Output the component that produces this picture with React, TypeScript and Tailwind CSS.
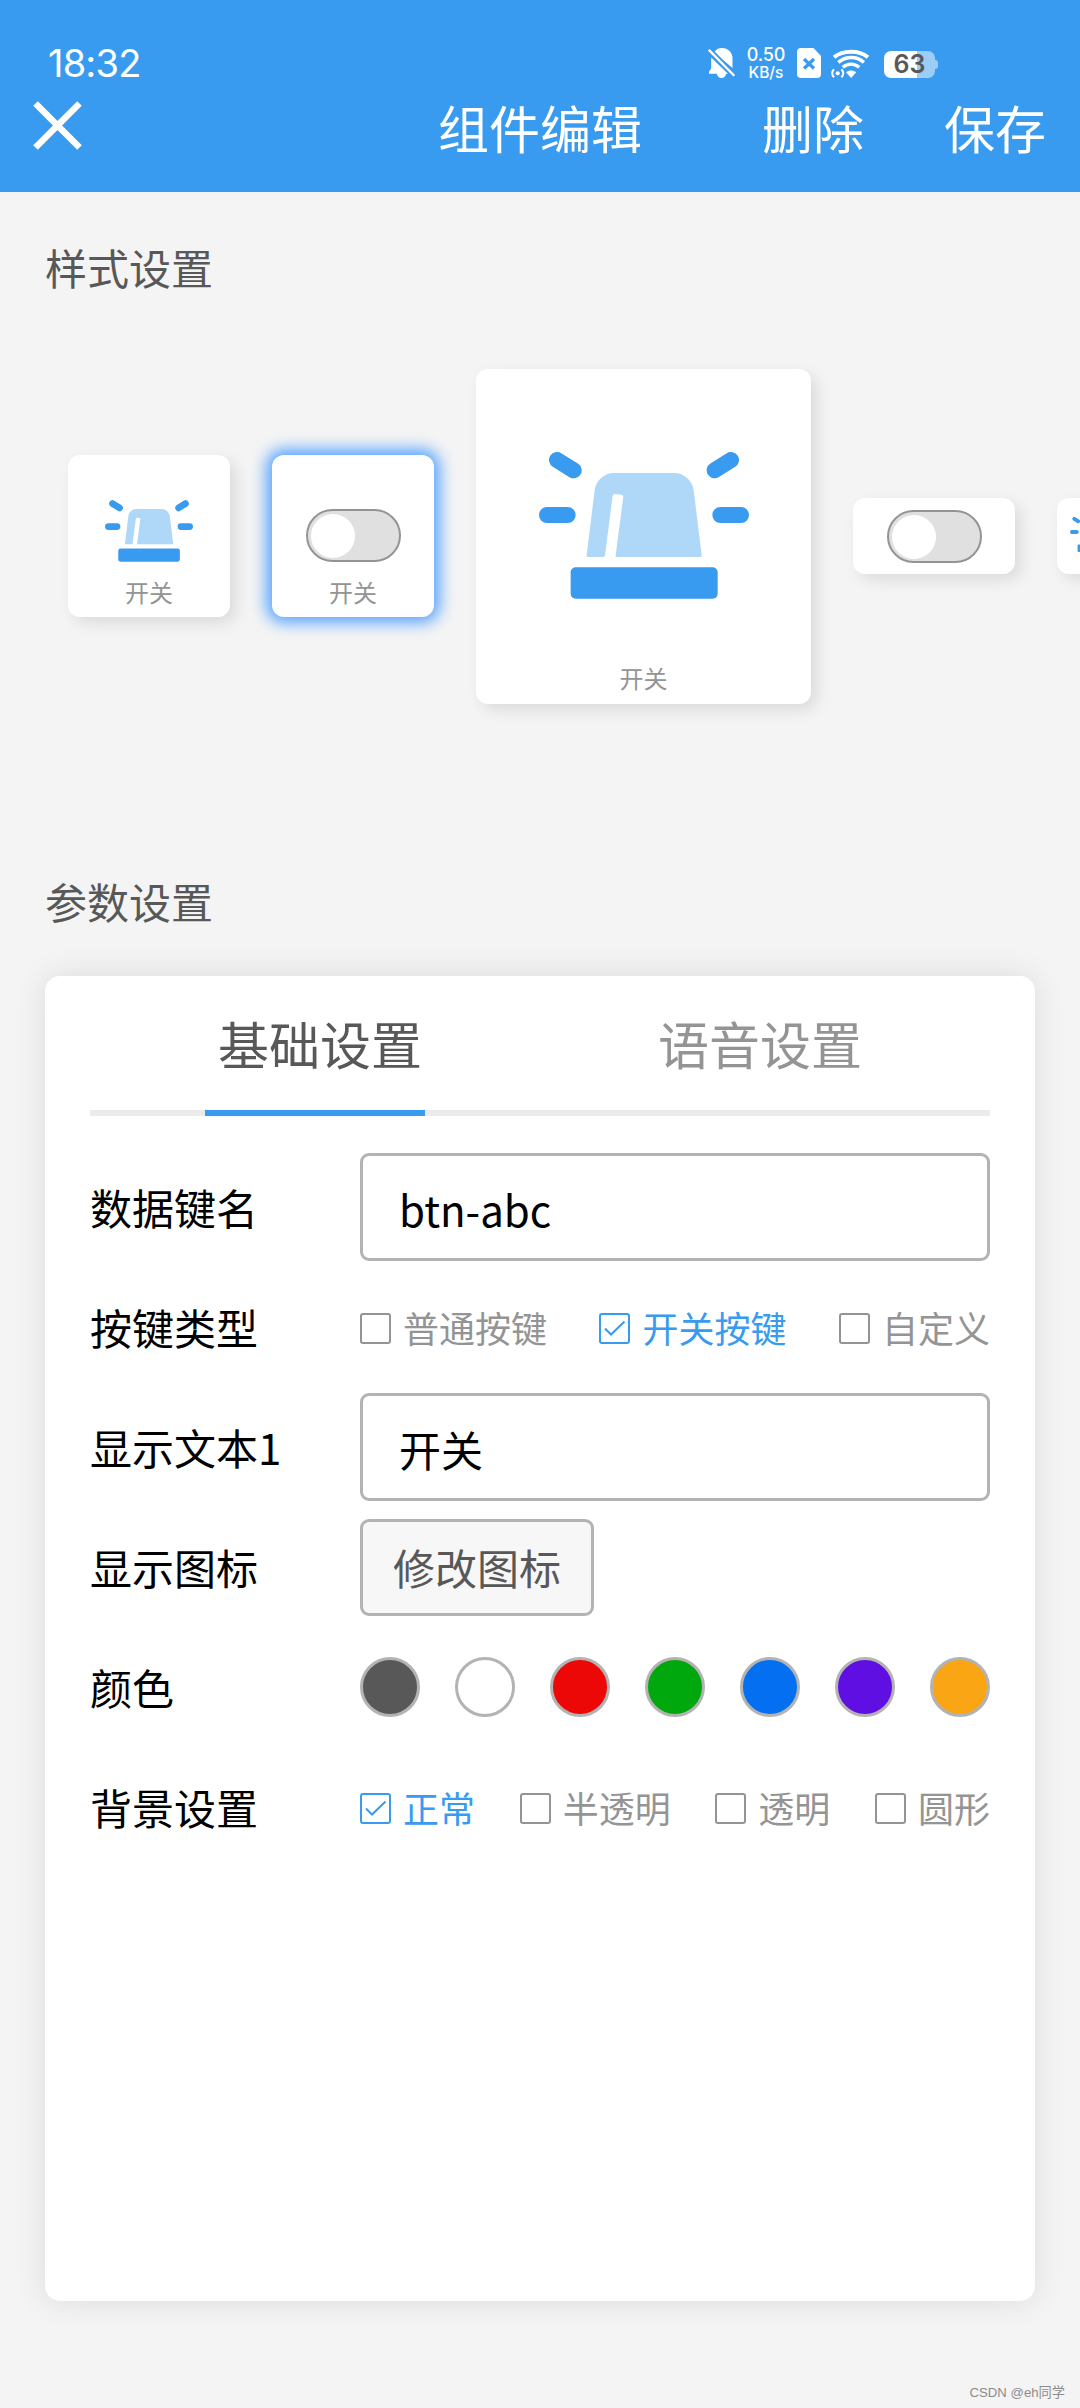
import { useState } from "react";
import type { ReactNode } from "react";

const COLORS = [
  "#585858",
  "#ffffff",
  "#eb0807",
  "#01a80d",
  "#056ff1",
  "#600fe2",
  "#faa614",
];

const KEY_TYPES = ["普通按键", "开关按键", "自定义"];
const BACKGROUNDS = ["正常", "半透明", "透明", "圆形"];

export default function App() {
  const [keyType, setKeyType] = useState("开关按键");
  const [background, setBackground] = useState("正常");

  return (
    <div className="flex h-[2408px] w-[1080px] flex-col overflow-hidden bg-[#f4f4f4] font-['Noto_Sans_CJK_SC',sans-serif] text-[42px] leading-none text-black">
      <header className="h-[192px] shrink-0 bg-[#399bef] text-white">
        <StatusBar />
        <NavBar />
      </header>

      <h2 className="mt-[54px] ml-[45px] h-[42px] shrink-0 text-[#585858]">
        样式设置
      </h2>
      <StyleList />

      <h2 className="mt-[96px] ml-[45px] h-[42px] shrink-0 text-[#585858]">
        参数设置
      </h2>
      <section className="mx-[45px] mt-[54px] h-[1325px] shrink-0 rounded-[15px] bg-white px-[45px] shadow-[0_0_32px_rgba(0,0,0,0.1)]">
        <Tabs />
        <div className="mt-[31px]">
          <Row label="数据键名">
            <TextField value="btn-abc" />
          </Row>
          <Row label="按键类型">
            <CheckGroup options={KEY_TYPES} value={keyType} onChange={setKeyType} />
          </Row>
          <Row label="显示文本1">
            <TextField value="开关" />
          </Row>
          <Row label="显示图标">
            <button
              type="button"
              className="h-[97px] w-[234px] rounded-[9px] border-[3px] border-[#b3b3b3] bg-[#f7f7f7] text-[#585858]"
            >
              修改图标
            </button>
          </Row>
          <Row label="颜色">
            <div className="flex w-full justify-between">
              {COLORS.map((color) => (
                <span
                  key={color}
                  className="size-[60px] rounded-full border-[3px] border-[#b3b3b3]"
                  style={{ backgroundColor: color }}
                />
              ))}
            </div>
          </Row>
          <Row label="背景设置">
            <CheckGroup
              options={BACKGROUNDS}
              value={background}
              onChange={setBackground}
            />
          </Row>
        </div>
      </section>

      <footer className="mt-[85px] mr-[15px] text-right font-['Liberation_Sans','Noto_Sans_CJK_SC',sans-serif] text-[13.2px] leading-[14px] text-[#8c8c8c]">
        CSDN @eh同学
      </footer>
    </div>
  );
}

function StatusBar() {
  return (
    <div className="flex h-[96px] items-start pt-[48px] pl-[48px] font-['Inter',sans-serif]">
      <span className="w-[660px] text-[38px] leading-[30px] tracking-[-0.8px]">
        18:32
      </span>
      <svg className="h-[30px] w-[28px]" viewBox="0 0 28 30" fill="currentColor">
        <path d="M6 4.400C8 1.500 10.500 0 14 0c6 0 10.500 4.500 10.500 10.500v9.500z" />
        <path d="M3.200 9.500 20 25.800H18.200c-.5 2.500-2.200 4.200-4.700 4.200s-4.200-1.700-4.700-4.200H1v-2l2.200-3.500z" />
        <path d="M2.200.4 27.700 26.400" stroke="#399bef" strokeWidth="2" />
        <path d="M.8 1.800 26.300 27.800" stroke="currentColor" strokeWidth="2.300" />
      </svg>
      <div className="ml-[11px] flex w-[38px] flex-col items-center font-medium">
        <span className="text-[18px] leading-[14px] tracking-[-0.2px]">0.50</span>
        <span className="mt-[4px] text-[15.500px] leading-[13px]">KB/s</span>
      </div>
      <svg className="ml-[12px] h-[30px] w-[24px]" viewBox="0 0 24 30">
        <path
          d="M4 0h12.500L24 8v18a4 4 0 0 1-4 4H4a4 4 0 0 1-4-4V4a4 4 0 0 1 4-4z"
          fill="currentColor"
        />
        <path d="m7 11 10 9.500M17 11 7 20.500" stroke="#399bef" strokeWidth="3.200" />
      </svg>
      <svg
        className="ml-[10px] h-[30px] w-[38px]"
        viewBox="0 0 38 30"
        fill="none"
        stroke="currentColor"
      >
        <path d="M3 9.200C12 1.800 28 1.800 37 9.200" strokeWidth="4" />
        <path d="M7.300 14.400c7.500-6.600 18.400-6.600 25.600 0" strokeWidth="3.600" />
        <path d="M11.800 19.300c5-4.200 11.400-4.200 16.500 0" strokeWidth="3.400" />
        <path d="m15 24.200c3-2.200 7.200-2.200 10.200 0L20.100 30z" fill="currentColor" stroke="none" />
        <circle cx="6.700" cy="25.300" r="2.100" fill="currentColor" stroke="none" />
        <path d="M3 21.300c-2.400 2.400-2.400 5.600 0 8M10.400 21.300c2.400 2.400 2.400 5.600 0 8" strokeWidth="2" />
      </svg>
      <div className="mt-[3px] ml-[15px] flex items-center">
        <span className="flex h-[27px] w-[51px] items-center justify-center rounded-[7px] bg-[linear-gradient(90deg,#fff_33px,#9ccdf7_33px)] text-[25px] font-semibold leading-none text-[#585858]">
          63
        </span>
        <span className="h-[9px] w-[3px] rounded-r-[3px] bg-[#9ccdf7]" />
      </div>
    </div>
  );
}

function NavBar() {
  return (
    <div className="flex h-[59px] items-center text-[51px]">
      <button type="button" aria-label="关闭" className="ml-[33px]">
        <svg className="size-[49px]" viewBox="0 0 49 49">
          <path
            d="m2.500 2.500 44 44m0-44-44 44"
            stroke="currentColor"
            strokeWidth="6.500"
          />
        </svg>
      </button>
      <h1 className="mt-[4px] ml-[356px] w-[204px]">组件编辑</h1>
      <button type="button" className="mt-[4px] ml-[120px]">
        删除
      </button>
      <button type="button" className="mt-[4px] ml-[80px]">
        保存
      </button>
    </div>
  );
}

function StyleList() {
  return (
    <div className="flex h-[496px] shrink-0 items-center gap-[42px] overflow-hidden pl-[68px]">
      <Card className="h-[162px] w-[162px] pb-[13px] shadow-[6px_6px_15px_rgba(0,0,0,0.1)]">
        <Siren className="mb-[18px] h-[62px] w-[88px]" />
        <CardLabel />
      </Card>
      <Card className="h-[162px] w-[162px] pb-[13px] shadow-[0_0_15px_6px_#5aa5ff]">
        <Toggle className="mb-[18px]" />
        <CardLabel />
      </Card>
      <Card className="h-[335px] w-[335px] pb-[14px] shadow-[6px_6px_15px_rgba(0,0,0,0.1)]">
        <Siren className="mb-[67px] h-[147px] w-[210px]" />
        <CardLabel />
      </Card>
      <Card className="h-[76px] w-[162px] pb-[11px] shadow-[6px_6px_15px_rgba(0,0,0,0.1)]">
        <Toggle />
      </Card>
      <Card className="h-[76px] w-[76px] pb-[22px] shadow-[6px_6px_15px_rgba(0,0,0,0.1)]">
        <Siren className="h-[35px] w-[50px]" />
      </Card>
    </div>
  );
}

function Card({
  className,
  children,
}: {
  className: string;
  children: ReactNode;
}) {
  return (
    <div
      className={`flex shrink-0 flex-col items-center justify-end rounded-[12px] bg-white ${className}`}
    >
      {children}
    </div>
  );
}

function CardLabel() {
  return <span className="text-[24px] text-[#949494]">开关</span>;
}

function Siren({ className }: { className: string }) {
  return (
    <svg className={className} viewBox="235 306 630 441">
      <g stroke="#399bef" strokeWidth="48" strokeLinecap="round">
        <path d="M289 330 339 361M811 330 762 361M259 495H321M779 495H841" />
      </g>
      <rect x="330" y="652" width="441" height="94" rx="15" fill="#399bef" />
      <path
        d="M381 621q-4 0-3-5L402 420C406 392 430 369 460 369H640C670 369 695 392 699 420L723 616q0 5-4 5H468q-4 0-3-5L488 440q0-5-5-6L462 432q-5 0-6 5L433 616q-1 5-5 5z"
        fill="#afd7f8"
      />
    </svg>
  );
}

function Toggle({ className = "" }: { className?: string }) {
  return (
    <div
      className={`flex h-[53px] w-[95px] items-center rounded-full border-2 border-[#949494] bg-[#e0e0e0] pl-[3px] ${className}`}
    >
      <span className="size-[44px] rounded-full bg-white" />
    </div>
  );
}

function Tabs() {
  return (
    <div>
      <div className="flex h-[134px] items-center justify-between px-[128px] text-[51px]">
        <button type="button" className="text-[#585858]">
          基础设置
        </button>
        <button type="button" className="text-[#949494]">
          语音设置
        </button>
      </div>
      <div className="h-[6px] bg-[#ebebeb] pl-[115px]">
        <div className="h-full w-[220px] bg-[#399bef]" />
      </div>
    </div>
  );
}

function Row({ label, children }: { label: string; children: ReactNode }) {
  return (
    <div className="flex h-[120px] items-center">
      <span className="w-[270px] shrink-0">{label}</span>
      <div className="flex flex-1 items-center">{children}</div>
    </div>
  );
}

function TextField({ value }: { value: string }) {
  return (
    <div className="flex h-[108px] w-full items-center rounded-[9px] border-[3px] border-[#b3b3b3] pt-[4px] pl-[36px]">
      {value}
    </div>
  );
}

function CheckGroup({
  options,
  value,
  onChange,
}: {
  options: string[];
  value: string;
  onChange: (option: string) => void;
}) {
  return (
    <div className="flex w-full justify-between text-[36px]">
      {options.map((option) => {
        const checked = option === value;
        return (
          <button
            key={option}
            type="button"
            onClick={() => onChange(option)}
            className={`flex items-center gap-[12px] ${
              checked ? "text-[#399bef]" : "text-[#949494]"
            }`}
          >
            <svg className="mt-[3px] size-[31px]" viewBox="0 0 31 31" fill="none" stroke="currentColor">
              <rect x="1" y="1" width="29" height="29" rx="2" strokeWidth="2" />
              {checked && <path d="m6 15.500 6 6L25.500 8.500" strokeWidth="2" />}
            </svg>
            {option}
          </button>
        );
      })}
    </div>
  );
}
